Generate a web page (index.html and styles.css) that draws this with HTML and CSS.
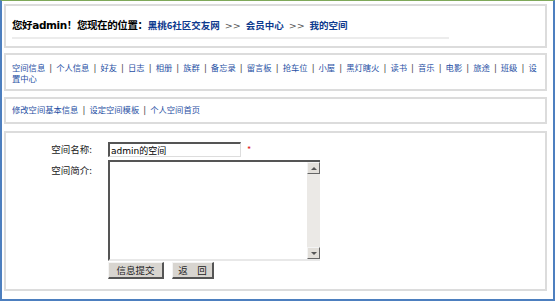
FILE: index.html
```html
<!DOCTYPE html>
<html lang="zh-CN">
<head>
<meta charset="utf-8">
<title>我的空间</title>
<link rel="stylesheet" href="styles.css">
</head>
<body>
<div class="frame">
  <div class="panel panel-head">
    <div class="crumb">
      <span class="hello">您好admin！您现在的位置：</span><a class="crumb-link" href="#">黑桃6社区交友网</a><span class="arrow">&gt;&gt;</span><a class="crumb-link" href="#">会员中心</a><span class="arrow">&gt;&gt;</span><a class="crumb-link" href="#">我的空间</a>
    </div>
  </div>
  <div class="panel panel-nav">
    <p class="links"><a href="#">空间信息</a><span class="sep">|</span><a href="#">个人信息</a><span class="sep">|</span><a href="#">好友</a><span class="sep">|</span><a href="#">日志</a><span class="sep">|</span><a href="#">相册</a><span class="sep">|</span><a href="#">族群</a><span class="sep">|</span><a href="#">备忘录</a><span class="sep">|</span><a href="#">留言板</a><span class="sep">|</span><a href="#">抢车位</a><span class="sep">|</span><a href="#">小屋</a><span class="sep">|</span><a href="#">黑灯瞎火</a><span class="sep">|</span><a href="#">读书</a><span class="sep">|</span><a href="#">音乐</a><span class="sep">|</span><a href="#">电影</a><span class="sep">|</span><a href="#">旅途</a><span class="sep">|</span><a href="#">班级</a><span class="sep">|</span><a href="#">设置中心</a></p>
  </div>
  <div class="panel panel-sub">
    <p class="links"><a href="#">修改空间基本信息</a><span class="sep">|</span><a href="#">设定空间模板</a><span class="sep">|</span><a href="#">个人空间首页</a></p>
  </div>
  <div class="panel panel-form">
    <div class="form">
      <label class="lbl lbl-name">空间名称:</label>
      <div class="ctl ctl-name"><input class="txt" type="text" value="admin的空间"><span class="req">*</span></div>
      <label class="lbl lbl-intro">空间简介:</label>
      <div class="ctl">
        <div class="area">
          <textarea class="area-input"></textarea>
          <div class="sbar">
            <div class="sbtn"><span class="tri tri-up"></span></div>
            <div class="strack"></div>
            <div class="sbtn"><span class="tri tri-down"></span></div>
          </div>
        </div>
      </div>
      <div></div>
      <div class="ctl btns">
        <button class="btn btn-submit" type="button">信息提交</button>
        <button class="btn btn-back" type="button">返　回</button>
      </div>
    </div>
  </div>
</div>
</body>
</html>
```

FILE: styles.css
```css
* { box-sizing: border-box; }
html, body { margin: 0; padding: 0; background: #ffffff; }
body {
  font-family: "DejaVu Sans", "Noto Sans CJK SC", sans-serif;
  font-size: 10px;
  color: #000;
}
a { text-decoration: none; }
p { margin: 0; }

.frame {
  width: 555px;
  height: 301px;
  border-top: 1px solid #7fa95a;
  border-left: 2px solid #4d7fbf;
  border-right: 2px solid #4d7fbf;
  border-bottom: 2px solid #4d7fbf;
  padding: 3px 6px 8px 2px;
  display: flex;
  flex-direction: column;
}

.panel {
  border: 2px solid #dcdcdc;
  flex: none;
}

.panel-head { height: 44px; padding: 12px 0 0 6px; }
.crumb {
  width: 437px;
  height: 21px;
  border-bottom: 2px solid #ececec;
  font-family: "Noto Sans CJK SC", sans-serif;
  font-size: 10.5px;
  line-height: 14px;
  font-weight: bold;
  white-space: nowrap;
}
.hello { font-family: "DejaVu Sans", "Noto Sans CJK SC", sans-serif; letter-spacing: -0.4px; }
.crumb-link { color: #0d3a8e; font-size: 9.5px; }
.arrow { color: #555; font-weight: normal; font-family: "DejaVu Sans", sans-serif; font-size: 9.5px; margin: 0 5px; }

.panel-nav { margin-top: 5px; height: 38px; padding: 7px 7px 0 6px; }
.panel-sub { margin-top: 6px; height: 27px; padding: 5px 7px 0 6px; }

.links {
  font-family: "Noto Sans CJK SC", sans-serif;
  font-size: 8.3px;
  line-height: 11px;
  word-break: break-all;
}
.links a { color: #1f50a4; }
.sep {
  display: inline-block;
  width: 11px;
  text-align: center;
  color: #555;
  font-weight: bold;
  font-size: 8px;
  line-height: 11px;
}

.panel-form { margin-top: 7px; height: 160px; padding-top: 9px; }
.form {
  display: grid;
  grid-template-columns: 86px 212px;
  column-gap: 16px;
  font-family: "Noto Sans CJK SC", sans-serif;
  font-size: 9.5px;
}
.lbl { text-align: right; color: #222; }
.lbl-name { line-height: 15px; }
.lbl-intro { padding-top: 4px; line-height: 12px; margin-top: 3px; }
.ctl-name { display: flex; align-items: center; height: 15px; }
.txt {
  width: 133px;
  height: 15px;
  margin: 0;
  padding: 0 0 0 1px;
  border-top: 2px solid #555;
  border-left: 2px solid #555;
  border-right: 1px solid #ddd;
  border-bottom: 1px solid #ddd;
  font-family: "DejaVu Sans", "Noto Sans CJK SC", sans-serif;
  font-size: 9px;
  line-height: 12px;
  color: #000;
  outline: none;
}
.req { color: #e02020; margin-left: 6px; font-size: 9px; }

.area {
  margin-top: 3px;
  width: 212px;
  height: 101px;
  display: flex;
  border-top: 2px solid #555;
  border-left: 2px solid #555;
  border-bottom: 2px solid #e8e8e8;
}
.area-input {
  flex: 1;
  border: none;
  margin: 0;
  padding: 0;
  resize: none;
  outline: none;
  overflow: hidden;
}
.sbar {
  width: 13px;
  display: flex;
  flex-direction: column;
  background: #ebe9e6;
}
.strack { flex: 1; }
.sbtn {
  height: 12px;
  background: #e2dfda;
  border-top: 1px solid #f4f4f4;
  border-left: 1px solid #f4f4f4;
  border-right: 1px solid #666;
  border-bottom: 1px solid #666;
  display: flex;
  align-items: center;
  justify-content: center;
}
.tri { width: 0; height: 0; border-left: 3px solid transparent; border-right: 3px solid transparent; }
.tri-up { border-bottom: 3px solid #555; }
.tri-down { border-top: 3px solid #555; }

.btns { display: flex; gap: 8px; margin-top: 1px; }
.btn {
  height: 17px;
  margin: 0;
  padding: 0;
  background: #d8d5d0;
  border-top: 1px solid #f4f4f4;
  border-left: 1px solid #f4f4f4;
  border-right: 2px solid #555;
  border-bottom: 2px solid #555;
  font-family: "Noto Sans CJK SC", sans-serif;
  font-size: 9.5px;
  line-height: 13px;
  color: #222;
}
.btn-submit { width: 56px; }
.btn-back { width: 42px; }
```
